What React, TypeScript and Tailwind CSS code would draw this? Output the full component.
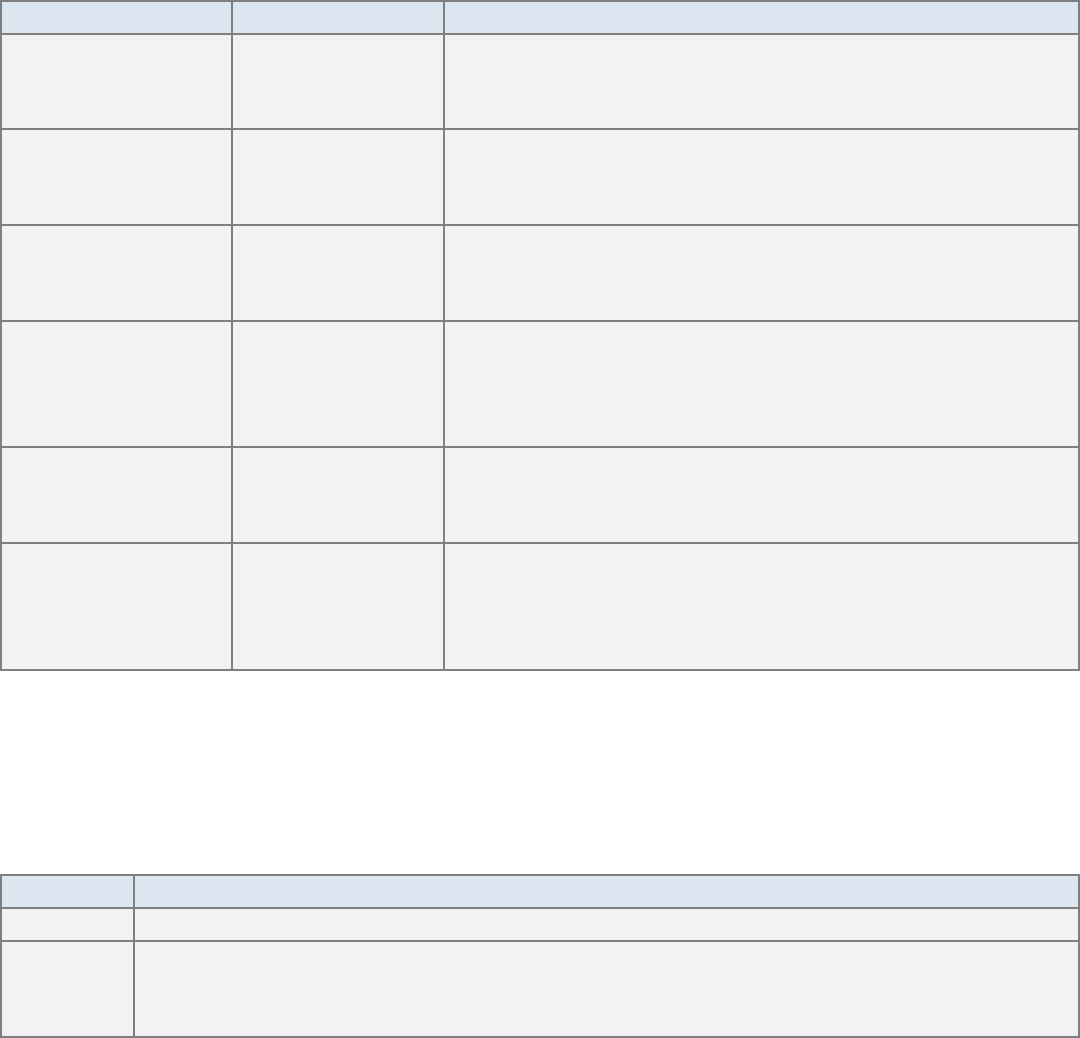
import React from "react";

const H = "bg-[#dce6f1]";
const B = "bg-[#f2f2f2]";

export default function App() {
  const t1Rows = 7;
  const t2Rows = 3;
  return (
    <div className="w-[1080px] h-[1038px] bg-white font-['Liberation_Sans',sans-serif]">
      <div className="grid grid-cols-[229px_210px_633px] grid-rows-[31px_93px_94px_94px_124px_94px_125px] gap-[2px] p-[2px] bg-[#7f7f7f] w-[1080px]">
        {Array.from({ length: t1Rows * 3 }).map((_, i) => (
          <div key={i} className={i < 3 ? H : B} />
        ))}
      </div>
      <div className="mt-[203px] grid grid-cols-[131px_943px] grid-rows-[31px_31px_94px] gap-[2px] p-[2px] bg-[#7f7f7f] w-[1080px]">
        {Array.from({ length: t2Rows * 2 }).map((_, i) => (
          <div key={i} className={i < 2 ? H : B} />
        ))}
      </div>
    </div>
  );
}
